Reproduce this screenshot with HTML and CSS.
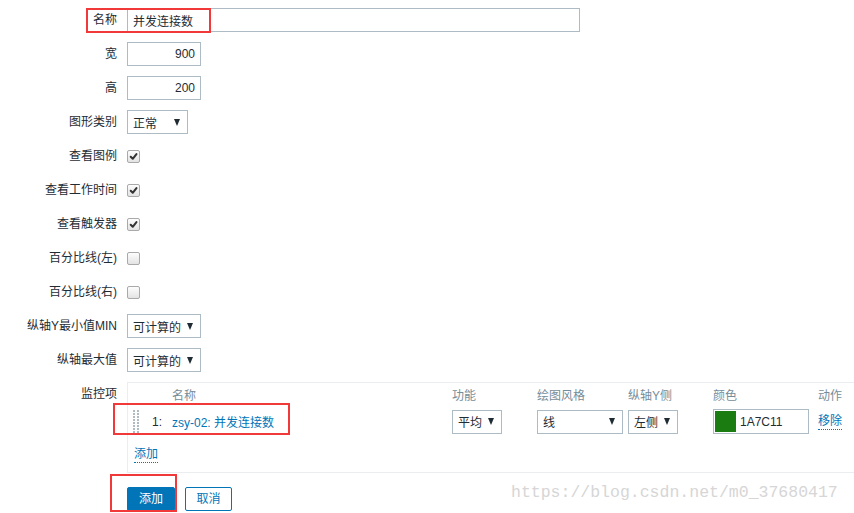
FILE: index.html
```html
<!DOCTYPE html>
<html lang="zh-CN">
  <head>
    <meta charset="UTF-8">
    <meta name="viewport" content="width=device-width, initial-scale=1.0">
    <title>图形</title>
    <link rel="stylesheet" href="styles.css">
  </head>
  <body>
    <form class="graph-form">
      <label class="lbl">名称</label>
      <div class="fld"><input type="text" class="txt txt-name" value="并发连接数"></div>

      <label class="lbl">宽</label>
      <div class="fld"><input type="text" class="txt txt-num" value="900"></div>

      <label class="lbl">高</label>
      <div class="fld"><input type="text" class="txt txt-num" value="200"></div>

      <label class="lbl">图形类别</label>
      <div class="fld"><div class="sel sel-type"><span>正常</span><i class="arrow"></i></div></div>

      <label class="lbl">查看图例</label>
      <div class="fld"><span class="chk on"><svg viewBox="0 0 13 13"><path d="M3.2 6.8 L5.6 9.2 L10 3.6"/></svg></span></div>

      <label class="lbl">查看工作时间</label>
      <div class="fld"><span class="chk on"><svg viewBox="0 0 13 13"><path d="M3.2 6.8 L5.6 9.2 L10 3.6"/></svg></span></div>

      <label class="lbl">查看触发器</label>
      <div class="fld"><span class="chk on"><svg viewBox="0 0 13 13"><path d="M3.2 6.8 L5.6 9.2 L10 3.6"/></svg></span></div>

      <label class="lbl">百分比线(左)</label>
      <div class="fld"><span class="chk"></span></div>

      <label class="lbl">百分比线(右)</label>
      <div class="fld"><span class="chk"></span></div>

      <label class="lbl">纵轴Y最小值MIN</label>
      <div class="fld"><div class="sel sel-calc"><span>可计算的</span><i class="arrow"></i></div></div>

      <label class="lbl">纵轴最大值</label>
      <div class="fld"><div class="sel sel-calc"><span>可计算的</span><i class="arrow"></i></div></div>

      <label class="lbl lbl-top">监控项</label>
      <div class="fld">
        <div class="items">
          <div class="items-grid items-head">
            <span></span><span></span>
            <span>名称</span>
            <span>功能</span>
            <span>绘图风格</span>
            <span>纵轴Y侧</span>
            <span>颜色</span>
            <span>动作</span>
          </div>
          <div class="items-grid items-row">
            <span class="drag"><svg width="6" height="23" viewBox="0 0 6 23">
              <defs><pattern id="dots" width="4" height="3" patternUnits="userSpaceOnUse"><rect width="2" height="2" fill="#aebbc3"/></pattern></defs>
              <rect width="6" height="23" fill="url(#dots)"/>
            </svg></span>
            <span class="num">1:</span>
            <a class="item-link" href="#">zsy-02: 并发连接数</a>
            <div class="sel sel-fn"><span>平均</span><i class="arrow"></i></div>
            <div class="sel sel-draw"><span>线</span><i class="arrow"></i></div>
            <div class="sel sel-fn"><span>左侧</span><i class="arrow"></i></div>
            <div class="color"><span class="swatch"></span><span>1A7C11</span></div>
            <a class="link-dot" href="#">移除</a>
          </div>
          <a class="link-dot add-link" href="#">添加</a>
        </div>
        <div class="buttons">
          <button type="button" class="btn btn-primary">添加</button>
          <button type="button" class="btn btn-alt">取消</button>
        </div>
      </div>
    </form>

    <!-- annotations from the screenshot -->
    <div class="mark mark-name"></div>
    <div class="mark mark-item"></div>
    <div class="mark mark-btn"></div>
    <div class="watermark">https://blog.csdn.net/m0_37680417</div>
  </body>
</html>
```

FILE: styles.css
```css
html, body { margin: 0; padding: 0; background: #fff; }
body { position: relative; width: 854px; height: 513px; overflow: hidden;
  font-family: "Liberation Sans", "Noto Sans CJK SC", sans-serif; font-size: 12px; color: #1f2c33; }
a { text-decoration: none; color: #0275b8; }

.graph-form { display: grid; grid-template-columns: 117px 1fr; column-gap: 10px; row-gap: 10px;
  padding-top: 8px; grid-auto-rows: minmax(24px, auto); }
.lbl { text-align: right; line-height: 24px; white-space: nowrap; }
.lbl-top { line-height: 24px; }
.fld { display: flex; flex-direction: column; align-items: flex-start; justify-content: center; min-height: 24px; }

.txt { box-sizing: border-box; height: 24px; margin: 0; padding: 0 5px; border: 1px solid #acbbc4; border-radius: 0;
  font: inherit; color: #1f2c33; background: #fff; outline: none; }
.txt-name { width: 453px; }
.txt-num { width: 74px; text-align: right; }

.sel { box-sizing: border-box; display: flex; align-items: center; justify-content: space-between; height: 24px;
  padding: 0 7px 0 5px; border: 1px solid #acbbc4; background: #fff; }
.sel-type { width: 61px; }
.sel-calc { width: 74px; }
.sel-fn { width: 50px; }
.sel-draw { width: 86px; }
.arrow { width: 0; height: 0; border-left: 3.5px solid transparent; border-right: 3.5px solid transparent; border-top: 7px solid #1f2c33; }

.chk { box-sizing: border-box; display: block; width: 13px; height: 13px; border: 1px solid #a9a9a9; border-radius: 2px;
  background: linear-gradient(#fdfdfd, #e3e3e3); }
.chk svg { display: block; width: 11px; height: 11px; }
.chk path { fill: none; stroke: #333; stroke-width: 2.4; stroke-linecap: round; stroke-linejoin: round; }

.items { box-sizing: border-box; width: 100%; height: 91px; border: 1px solid #ebeef0; border-right: none;
  padding: 6px 0 0 5px; }
.items-grid { display: grid; grid-template-columns: 19px 20px 280px 85px 91px 85px 105px auto; align-items: center; }
.items-head { color: #768d99; line-height: 14px; }
.items-row { margin-top: 6px; height: 25px; }
.drag { display: flex; }
.drag svg { display: block; }
.num { color: #1f2c33; }
.item-link { color: #0275b8; }
.color { box-sizing: border-box; display: flex; align-items: center; gap: 4px; width: 96px; height: 25px; padding: 1px;
  border: 1px solid #acbbc4; }
.swatch { width: 21px; height: 21px; background: #1a7c11; }
.link-dot { border-bottom: 1px dotted #0275b8; line-height: 15px; justify-self: start; }
.add-link { display: inline-block; margin: 13px 0 0 1px; }

.buttons { display: flex; gap: 10px; margin-top: 14px; }
.btn { all: unset; box-sizing: border-box; height: 24px; padding: 0; line-height: 22px; border: 1px solid #0275b8;
  border-radius: 2px; font-size: 12px; text-align: center; white-space: nowrap; }
.btn-primary { width: 48px; background: #0275b8; color: #fff; }
.btn-alt { width: 47px; background: #fff; color: #0275b8; }

.mark { position: absolute; border: 2px solid #f2393a; box-sizing: border-box; }
.mark-name { left: 86px; top: 8px; width: 125px; height: 25px; }
.mark-item { left: 113px; top: 403px; width: 177px; height: 32px; }
.mark-btn { left: 110px; top: 474px; width: 67px; height: 38px; }

.watermark { position: absolute; left: 511px; top: 483px; font-family: "Liberation Mono", monospace; font-size: 16.5px;
  color: #d6d6d6; letter-spacing: 0; white-space: nowrap; }
```
